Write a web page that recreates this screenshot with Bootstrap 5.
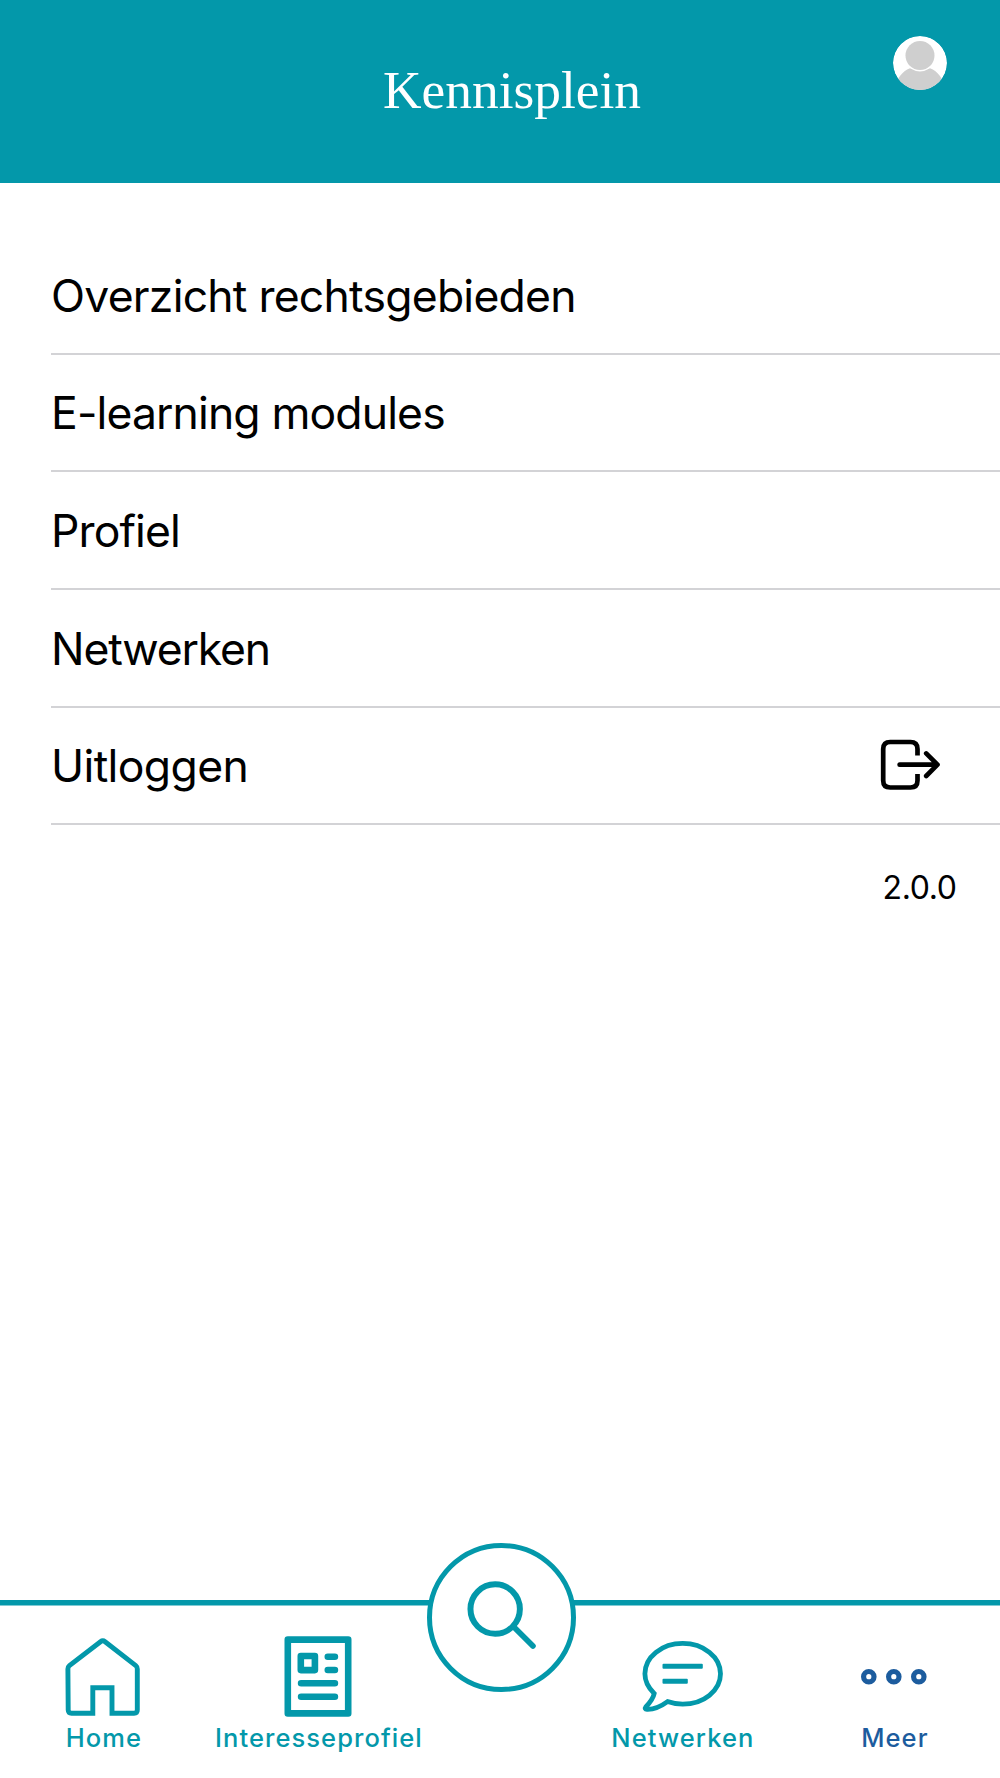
<!DOCTYPE html>
<html lang="nl">
<head>
<meta charset="utf-8">
<meta name="viewport" content="width=device-width, initial-scale=1">
<title>Kennisplein</title>
<link rel="stylesheet" href="https://cdn.jsdelivr.net/npm/bootstrap@5.3.0/dist/css/bootstrap.min.css">
<style>
:root { --teal: #0398aa; --navy: #1c5c9e; }
body { font-family: Inter, "Liberation Sans", sans-serif; color: #000; }
.app-header { height: 183.3px; padding: 36px 53px 0 131px; background: var(--teal); }
.app-title { font: 400 53.4px/60px "Liberation Serif", serif; margin-top: 24px; }
.avatar { width: 54px; height: 54px; }
.menu-list { padding: 54px 0 0 51px; --bs-list-group-bg: transparent; }
.menu-row { height: 117.6px; padding: 2px 60px 0 0; border-bottom: 2px solid #d3d3d6 !important; font-size: 44.5px; letter-spacing: -.87px; color: #000; }
.menu-row.wide { letter-spacing: -.76px; }
.menu-row.tight { letter-spacing: -1.15px; }
.menu-row.loose { letter-spacing: -.62px; }
.menu-row svg { margin-top: -3px; }
.version { font-size: 32px; line-height: 48px; letter-spacing: -.4px; padding-right: 43.5px; margin-top: 39px; }
.tab-bar { display: grid; grid-template-columns: 207px 223px 143px 219px 205px; height: 178px; border-top: 5px solid var(--teal); box-shadow: inset 0 .5px 0 var(--teal); }
.tab-item { color: var(--teal); padding-top: 30px; font-size: 25.5px; font-weight: 450; line-height: 30px; letter-spacing: 1.08px; }
.tab-item.active { color: var(--navy); }
.tab-item svg { width: 80px; height: 84px; margin: 0 1px 4px 0; fill: none; stroke: currentColor; overflow: visible; }
.tab-item span { margin-right: -.8px; }
.search-btn { width: 149.5px; height: 149.5px; margin: -62.3px -3.2px 0 -3.3px; border: 5px solid var(--teal); color: var(--teal); }
</style>
</head>
<body>
<div class="d-flex flex-column vh-100 bg-white overflow-hidden">
  <header class="app-header d-flex align-items-start text-white flex-shrink-0">
    <h1 class="app-title flex-grow-1 text-center mb-0">Kennisplein</h1>
    <svg class="avatar rounded-circle" viewBox="0 0 54 54" aria-label="Profiel">
      <circle cx="27" cy="27" r="27" fill="#fff"/>
      <path d="M0 54C4 43 9 35 17 32.3Q27 38.5 37 32.3C45 35 50 43 54 54Z" fill="#cfcfcf"/>
      <circle cx="27" cy="19.6" r="14.5" fill="#cfcfcf"/>
    </svg>
  </header>

  <main class="flex-grow-1">
    <div class="list-group list-group-flush menu-list">
      <a class="list-group-item menu-row wide d-flex align-items-center">Overzicht rechtsgebieden</a>
      <a class="list-group-item menu-row d-flex align-items-center">E-learning modules</a>
      <a class="list-group-item menu-row d-flex align-items-center">Profiel</a>
      <a class="list-group-item menu-row tight d-flex align-items-center">Netwerken</a>
      <a class="list-group-item menu-row loose d-flex align-items-center justify-content-between">Uitloggen
        <svg width="60" height="52" viewBox="0 0 60 52" fill="none" stroke="#000" stroke-width="4.7" stroke-linecap="round" stroke-linejoin="round">
          <path stroke-linecap="butt" d="M37.5 16.5V10Q37.5 3 30.5 3H10.2Q3.2 3 3.2 10V41.5Q3.2 48.5 10.2 48.5H30.5Q37.5 48.5 37.5 41.5V35"/>
          <path d="M19.6 25.7H57M46.2 14.4L57.5 25.7L46.2 37"/>
        </svg>
      </a>
    </div>
    <div class="version text-end">2.0.0</div>
  </main>

  <nav class="tab-bar flex-shrink-0">
    <a class="tab-item d-flex flex-column align-items-center text-decoration-none">
      <svg viewBox="0 0 80 84" stroke-width="4.9"><path d="M4.9 34Q4.9 31.8 6.4 30.6L37.5 6.7Q39.8 5 42.1 6.7L72.8 30.6Q74.3 31.8 74.3 34V75Q74.3 78.2 71.1 78.2H49V52.7H29.8V78.2H8.5Q5.3 78.2 5.2 75Z"/></svg>
      <span>Home</span>
    </a>
    <a class="tab-item d-flex flex-column align-items-center text-decoration-none">
      <svg viewBox="0 0 80 84" stroke-width="6.6" stroke-linecap="round" stroke-linejoin="round">
        <path d="M9.8 4.6H70.2V78.4H9.8Z"/><path d="M22.8 21H36.9V35.1H22.8Z"/>
        <path d="M49.8 21.7H56.9M49.8 35H56.9M23.1 48.3H56.9M23.1 61.7H56.9"/>
      </svg>
      <span>Interesseprofiel</span>
    </a>
    <a class="search-btn rounded-circle bg-white d-flex position-relative" aria-label="Zoeken">
      <svg width="140" height="140" viewBox="-70 -70 140 140" fill="none" stroke="currentColor" stroke-width="6" stroke-linecap="round">
        <circle cx="-6.6" cy="-9" r="24.8"/><path stroke-width="5.7" d="M12.2 9L31.3 28.2"/>
      </svg>
    </a>
    <a class="tab-item d-flex flex-column align-items-center text-decoration-none">
      <svg viewBox="0 0 80 84" stroke-width="4.8">
        <path d="M25.5 66.6C30 68.3 35 69.2 40.7 69.2C61.6 69.2 78.5 55.6 78.5 38.8S61.6 8.4 40.7 8.4S2.9 22 2.9 38.8C2.9 46 6.5 53 12.2 58.5C11.5 62 8 67.5 3.8 72Q2.2 74.2 5 74.3C13 74.6 19.5 71 25.5 66.6Z"/>
        <g fill="currentColor" stroke="none"><rect x="20.5" y="28.8" width="40.3" height="5" rx="1"/><rect x="20.5" y="43.8" width="25.3" height="5" rx="1"/></g>
      </svg>
      <span>Netwerken</span>
    </a>
    <a class="tab-item active d-flex flex-column align-items-center text-decoration-none">
      <svg viewBox="0 0 80 84" stroke-width="5.2"><circle cx="14.8" cy="41.7" r="5.2"/><circle cx="39.8" cy="41.7" r="5.2"/><circle cx="64.8" cy="41.7" r="5.2"/></svg>
      <span>Meer</span>
    </a>
  </nav>
</div>
<script src="https://cdn.jsdelivr.net/npm/bootstrap@5.3.0/dist/js/bootstrap.bundle.min.js"></script>
</body>
</html>
